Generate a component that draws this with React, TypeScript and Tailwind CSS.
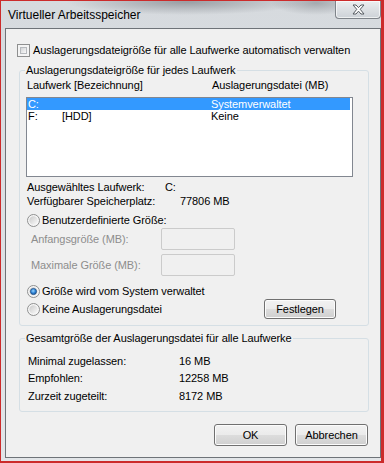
import { ReactNode, useId } from "react";

const Radio = ({ checked = false }: { checked?: boolean }) => {
  const id = useId().replace(/:/g, "");
  return (
    <svg width="13" height="13" viewBox="0 0 13 13" className="shrink-0">
      <defs>
        <linearGradient id={`${id}f`} x1="0" y1="0" x2="1" y2="1">
          <stop offset="0" stopColor="#c9c9c9" />
          <stop offset="1" stopColor="#fbfbfb" />
        </linearGradient>
        <radialGradient id={`${id}d`} cx="0.45" cy="0.4" r="0.65">
          <stop offset="0" stopColor="#9ad6ff" />
          <stop offset="0.55" stopColor="#2c82d6" />
          <stop offset="1" stopColor="#1b4f8e" />
        </radialGradient>
      </defs>
      <circle cx="6.5" cy="6.5" r="6" fill="#f6f6f6" stroke="#8e8f8f" />
      <circle cx="6.5" cy="6.5" r="4.2" fill={`url(#${id}f)`} />
      {checked && (
        <circle cx="6.5" cy="6.5" r="3.1" fill={`url(#${id}d)`} stroke="#1c4a80" strokeWidth="0.7" />
      )}
    </svg>
  );
};

const Checkbox = () => (
  <div className="h-[13px] w-[13px] shrink-0 border border-[#8e8f8f] bg-[#f4f4f4] p-[2px]">
    <div className="h-full w-full border border-[#b6b9bd] bg-[linear-gradient(135deg,#d2d4d6,#f9f9f9)]" />
  </div>
);

const Field = () => (
  <div className="h-[22px] w-[74px] rounded-[2px] border border-[#cbcbcb] bg-[#f0f0f0]" />
);

const Button = ({ children, className }: { children: ReactNode; className: string }) => (
  <button
    className={`flex items-center justify-center rounded-[3px] border border-[#707070] bg-[linear-gradient(#f2f2f2_0%,#ebebeb_50%,#dddddd_50%,#cfcfcf_100%)] text-black shadow-[inset_0_0_0_1px_#fcfcfc] ${className}`}
  >
    {children}
  </button>
);

const CloseIcon = () => (
  <svg width="13" height="11" viewBox="0 0 13 11">
    <polygon
      points="1,1 4,1 6.5,3.6 9,1 12,1 8.2,5.3 12,10 9,10 6.5,7.2 4,10 1,10 4.8,5.3"
      fill="#ffffff"
      stroke="#555a60"
      strokeWidth="1"
      strokeLinejoin="round"
    />
  </svg>
);

export default function App() {
  return (
    <div className="flex h-[463px] w-[384px] flex-col border-t border-l border-r-[3px] border-b-[2px] border-[#cc2b2b] bg-[radial-gradient(ellipse_120px_13px_at_185px_1px,rgba(105,110,116,0.55),transparent),radial-gradient(ellipse_45px_12px_at_315px_2px,rgba(105,110,116,0.45),transparent),linear-gradient(#d6dade,#e2e5e8)] font-['Liberation_Sans',Arial,sans-serif] text-[11px] leading-[14px] tracking-[-0.08px] text-black">
      <div className="flex h-[27px] items-center justify-between pl-[7px]">
        <span className="text-[12px] tracking-normal">Virtueller Arbeitsspeicher</span>
        <div className="flex h-[18px] w-[46px] self-start items-center justify-center rounded-b-[4px] border border-t-0 border-[#7f848a] bg-[linear-gradient(#eceef0,#cdd2d7)] shadow-[inset_0_0_0_1px_rgba(255,255,255,0.65)]">
          <CloseIcon />
        </div>
      </div>

      <div className="mb-[3px] ml-[4px] flex h-[430px] flex-col border border-[#6e7378] bg-[#f0f0f0]">
        <div className="ml-[11px] mt-[14px] flex h-[14px] items-center gap-[3px]">
          <Checkbox />
          <span>Auslagerungsdateigröße für alle Laufwerke automatisch verwalten</span>
        </div>

        <fieldset className="ml-[13px] mt-[6px] w-[350px] rounded-[3px] border border-[#d5dfe5] pb-[6px]">
          <legend className="ml-[5px] px-[1px] leading-[14px]">Auslagerungsdateigröße für jedes Laufwerk</legend>
          <div className="pl-[6px]">
            <div className="mt-[1px] flex h-[14px] items-center pl-[1px]">
              <span className="w-[185px]">Laufwerk [Bezeichnung]</span>
              <span>Auslagerungsdatei (MB)</span>
            </div>
            <div className="mt-[5px] h-[80px] w-[327px] border border-[#828790] bg-white pr-[2px]">
              <div className="flex h-[12px] items-center bg-[#3399ff] pl-[1px] leading-[12px] text-white">
                <span className="w-[183px]">C:</span>
                <span>Systemverwaltet</span>
              </div>
              <div className="flex h-[12px] items-center pl-[1px] leading-[12px]">
                <span className="w-[34px]">F:</span>
                <span className="w-[149px]">[HDD]</span>
                <span>Keine</span>
              </div>
            </div>
            <div className="mt-[3px] flex h-[14px] items-center pl-[1px]">
              <span className="w-[138px]">Ausgewähltes Laufwerk:</span>
              <span>C:</span>
            </div>
            <div className="flex h-[14px] items-center pl-[1px]">
              <span className="w-[153px]">Verfügbarer Speicherplatz:</span>
              <span>77806 MB</span>
            </div>
            <div className="mt-[5px] flex h-[14px] items-center gap-[2px] pl-[1px]">
              <Radio />
              <span>Benutzerdefinierte Größe:</span>
            </div>
            <div className="mt-[1px] flex h-[22px] items-center pl-[5px] text-[#8d8d8d]">
              <span className="w-[130px]">Anfangsgröße (MB):</span>
              <Field />
            </div>
            <div className="mt-[4px] flex h-[22px] items-center pl-[5px] text-[#8d8d8d]">
              <span className="w-[130px]">Maximale Größe (MB):</span>
              <Field />
            </div>
            <div className="mt-[8px] flex h-[14px] items-center gap-[2px] pl-[1px]">
              <Radio checked />
              <span>Größe wird vom System verwaltet</span>
            </div>
            <div className="mt-[1px] flex h-[20px] items-center">
              <div className="flex w-[238px] items-center gap-[2px] pl-[1px]">
                <Radio />
                <span>Keine Auslagerungsdatei</span>
              </div>
              <Button className="h-[20px] w-[72px]">Festlegen</Button>
            </div>
          </div>
        </fieldset>

        <fieldset className="ml-[13px] mt-[5px] w-[350px] rounded-[3px] border border-[#d5dfe5] pb-[8px]">
          <legend className="ml-[5px] px-[1px] leading-[14px]">Gesamtgröße der Auslagerungsdatei für alle Laufwerke</legend>
          <div className="pl-[8px]">
            <div className="mt-[9px] flex h-[14px] items-center">
              <span className="w-[151px]">Minimal zugelassen:</span>
              <span>16 MB</span>
            </div>
            <div className="mt-[3px] flex h-[14px] items-center">
              <span className="w-[151px]">Empfohlen:</span>
              <span>12258 MB</span>
            </div>
            <div className="mt-[4px] flex h-[14px] items-center">
              <span className="w-[151px]">Zurzeit zugeteilt:</span>
              <span>8172 MB</span>
            </div>
          </div>
        </fieldset>

        <div className="mt-[12px] flex justify-end gap-[8px] pr-[12px]">
          <Button className="h-[22px] w-[73px]">OK</Button>
          <Button className="h-[22px] w-[73px]">Abbrechen</Button>
        </div>
      </div>
    </div>
  );
}
